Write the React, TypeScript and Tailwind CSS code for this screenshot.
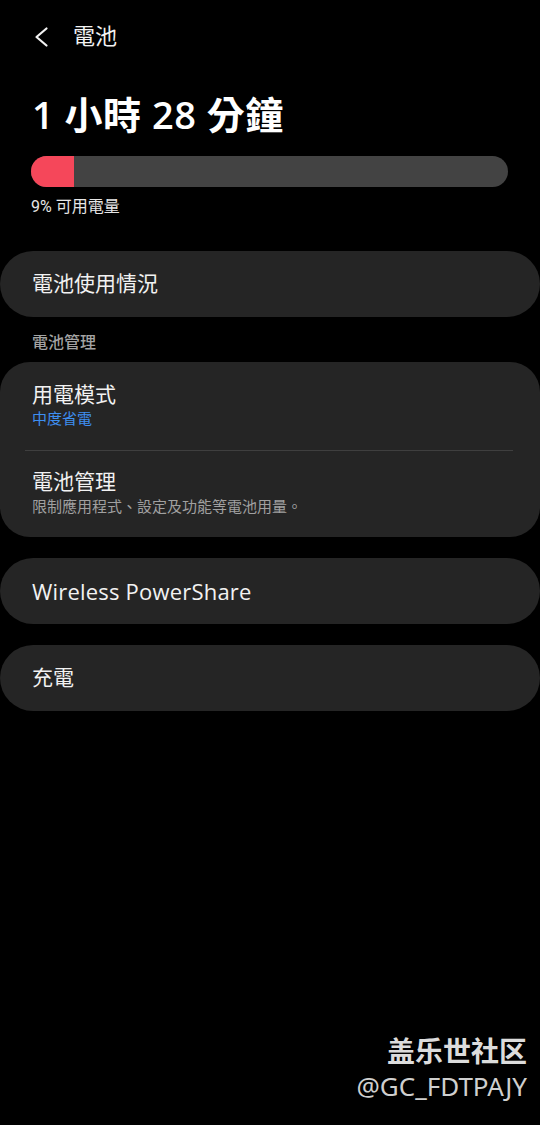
import React from "react";

const font = { fontFamily: 'Roboto, "Noto Sans CJK TC", sans-serif' };

function Card({ children, className = "" }: { children: React.ReactNode; className?: string }) {
  return <div className={`bg-[#252525] ${className}`}>{children}</div>;
}

export default function App() {
  return (
    <div className="relative w-[540px] h-[1125px] bg-black text-white overflow-hidden" style={font}>
      <div className="h-[73px] flex items-center">
        <svg className="ml-[29px]" width="24" height="24" viewBox="0 0 24 24" fill="none">
          <path d="M17.5 3.5 L7.5 12 L17.5 20.5" stroke="#f2f2f2" strokeWidth="2.2" strokeLinecap="round" strokeLinejoin="round" />
        </svg>
        <span className="ml-[20px] text-[22px] leading-[28px] text-[#f2f2f2]">電池</span>
      </div>
      <div className="mt-[18px] px-[32px] text-[38px] leading-[46px] font-semibold tracking-[0.5px] text-white" style={{ fontFamily: '"Open Sans", "Noto Sans CJK TC", sans-serif' }}>1 小時 28 分鐘</div>
      <div className="mt-[19px] ml-[31px] w-[477px] h-[31px] rounded-full bg-[#434343] overflow-hidden flex">
        <div className="w-[43px] h-full bg-[#f5475a]" />
      </div>
      <div className="mt-[10px] pl-[31px] text-[16px] leading-[20px] text-[#e6e6e6]">9% 可用電量</div>
      <Card className="mt-[34px] h-[66px] rounded-[33px] flex items-center pl-[32px]">
        <span className="text-[21px] leading-[28px] text-[#f2f2f2]">電池使用情況</span>
      </Card>
      <div className="mt-[16px] pl-[32px] text-[16px] leading-[20px] font-medium text-[#a3a3a3]">電池管理</div>
      <Card className="mt-[9px] rounded-[30px] pt-[19px] pb-[20px]">
        <div className="pl-[32px]">
          <div className="text-[21px] leading-[28px] text-[#f2f2f2]">用電模式</div>
          <div className="text-[15px] leading-[20px] text-[#3e8ef0]">中度省電</div>
        </div>
        <div className="mt-[21px] ml-[25px] mr-[27px] h-px bg-[#3f3f3f]" />
        <div className="pl-[32px] mt-[17px]">
          <div className="text-[21px] leading-[28px] text-[#f2f2f2]">電池管理</div>
          <div className="mt-[1px] text-[15px] leading-[20px] text-[#a0a0a0]">限制應用程式、設定及功能等電池用量。</div>
        </div>
      </Card>
      <Card className="mt-[21px] h-[66px] rounded-[33px] flex items-center pl-[32px]">
        <span className="text-[22px] leading-[28px] tracking-[0.2px] text-[#f2f2f2]" style={{ fontFamily: '"Open Sans", sans-serif' }}>Wireless PowerShare</span>
      </Card>
      <Card className="mt-[21px] h-[66px] rounded-[33px] flex items-center pl-[32px]">
        <span className="text-[21px] leading-[28px] text-[#f2f2f2]">充電</span>
      </Card>
      <div className="absolute right-[13px] top-[1031px] flex flex-col items-end">
        <div className="text-[28px] leading-[38px] font-bold text-[#dcdcdc]" style={{ fontFamily: '"Noto Sans CJK SC", sans-serif' }}>盖乐世社区</div>
        <div className="text-[26px] leading-[34px] text-[#cfcfcf]" style={{ fontFamily: '"Noto Sans", sans-serif' }}>@GC_FDTPAJY</div>
      </div>
    </div>
  );
}
